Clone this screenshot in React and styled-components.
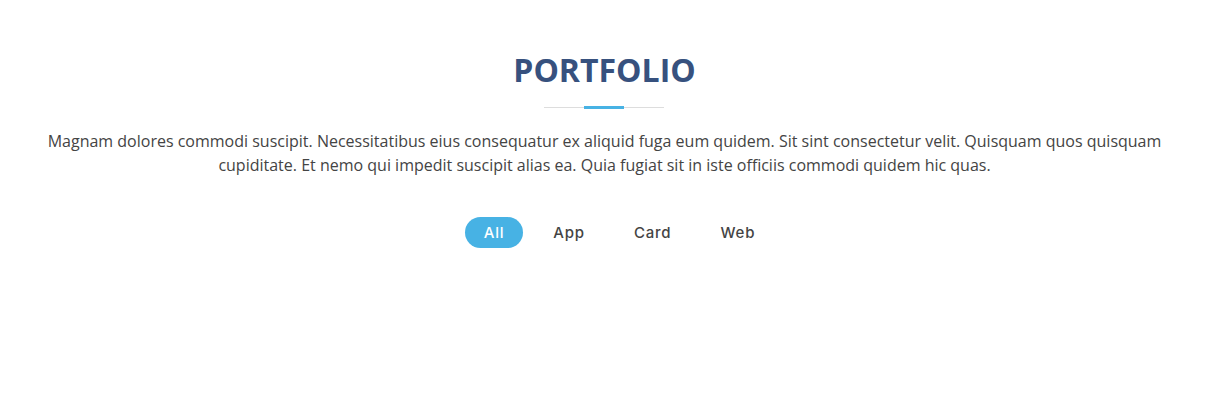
import React, { useState } from "react";
import styled, { createGlobalStyle } from "styled-components";

const GlobalStyle = createGlobalStyle`
  body {
    margin: 0;
    background: #fff;
    font-family: "Open Sans", "Liberation Sans", sans-serif;
    color: #444;
  }
`;

const Section = styled.section`
  padding: 51px 0 60px 4px;
`;

const Container = styled.div`
  max-width: 1116px;
  margin: 0 auto;
  padding: 0 12px;
  display: flex;
  flex-direction: column;
  align-items: center;
`;

const Title = styled.h2`
  position: relative;
  margin: 0 0 20px;
  padding-bottom: 20px;
  font-size: 32px;
  line-height: 1.2;
  font-weight: 700;
  text-transform: uppercase;
  color: #37517e;

  &::before {
    content: "";
    position: absolute;
    left: calc(50% - 60px);
    bottom: 1px;
    width: 120px;
    height: 1px;
    background: #ddd;
  }

  &::after {
    content: "";
    position: absolute;
    left: calc(50% - 20px);
    bottom: 0;
    width: 40px;
    height: 3px;
    background: #47b2e4;
  }
`;

const Lead = styled.p`
  margin: 0;
  font-size: 16px;
  line-height: 24px;
  text-align: center;
  color: #444;
`;

const Filters = styled.ul`
  list-style: none;
  margin: 40px 0 0;
  padding: 0 0 0 30px;
  display: flex;
  justify-content: center;
  gap: 11px;
`;

const Filter = styled.li`
  height: 31px;
  padding: 0 19px;
  display: flex;
  align-items: center;
  border-radius: 50px;
  font-family: Inter, "Noto Sans", sans-serif;
  font-size: 15px;
  font-weight: 500;
  letter-spacing: 0.8px;
  cursor: pointer;
  color: ${(p) => (p.$active ? "#fff" : "#444")};
  background: ${(p) => (p.$active ? "#47b2e4" : "transparent")};
`;

const filters = ["All", "App", "Card", "Web"];

export default function App() {
  const [active, setActive] = useState("All");

  return (
    <>
      <GlobalStyle />
      <Section>
        <Container>
          <Title>Portfolio</Title>
          <Lead>
            Magnam dolores commodi suscipit. Necessitatibus eius consequatur ex
            aliquid fuga eum quidem. Sit sint consectetur velit. Quisquam quos
            quisquam cupiditate. Et nemo qui impedit suscipit alias ea. Quia
            fugiat sit in iste officiis commodi quidem hic quas.
          </Lead>
          <Filters>
            {filters.map((f) => (
              <Filter key={f} $active={active === f} onClick={() => setActive(f)}>
                {f}
              </Filter>
            ))}
          </Filters>
        </Container>
      </Section>
    </>
  );
}
